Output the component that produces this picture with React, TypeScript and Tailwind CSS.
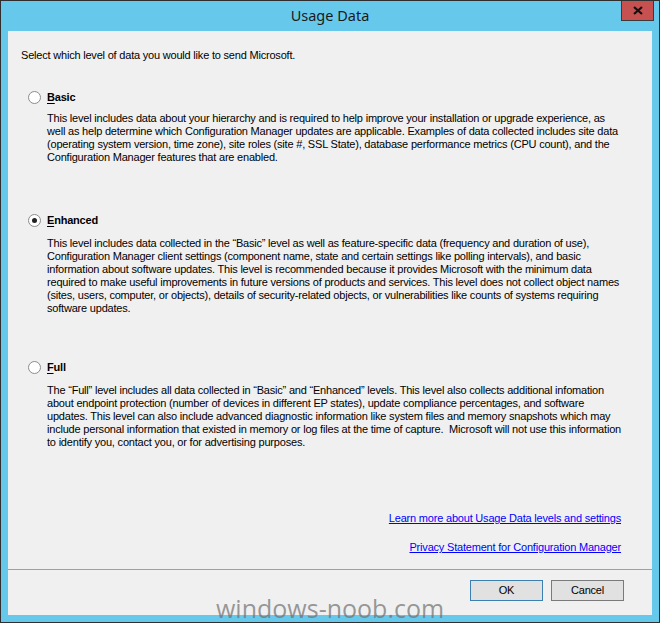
import React from 'react';

const body = "font-['Liberation_Sans',Arial,sans-serif] text-[11px] leading-[13px] tracking-[-0.2px] text-black";

function Radio({ checked }: { checked?: boolean }) {
  return (
    <span className="flex h-[13px] w-[13px] items-center justify-center rounded-full border border-[#8c8c8c] bg-white">
      {checked && <span className="h-[5px] w-[5px] rounded-full bg-[#222]" />}
    </span>
  );
}

function Option({
  label,
  checked,
  lines,
  className,
  descTop,
}: {
  label: string;
  checked?: boolean;
  lines: string[];
  className: string;
  descTop: string;
}) {
  return (
    <div className={className}>
      <div className="flex h-[13px] items-center gap-[6px] pl-[20px]">
        <Radio checked={checked} />
        <span className={`${body} font-bold`}>
          <span className="underline underline-offset-2">{label[0]}</span>
          {label.slice(1)}
        </span>
      </div>
      <div className={`${body} ${descTop} whitespace-pre pl-[39px]`}>
        {lines.map((l, i) => (
          <div key={i}>{l}</div>
        ))}
      </div>
    </div>
  );
}

export default function App() {
  return (
    <div className="relative h-[623px] w-[660px] overflow-hidden border border-[#2f2f2f] bg-[#66c9ec]">
      {/* title bar */}
      <div className="relative flex h-[30px] items-center justify-center">
        <span className="font-['Noto_Sans',sans-serif] text-[14.5px] text-[#1a1a1a]">Usage Data</span>
        <div className="absolute right-[5px] top-[-1px] flex h-[21px] w-[33px] items-center justify-center border border-[#3a3a3a] bg-[#c75050]">
          <svg width="10" height="9" viewBox="0 0 10 9">
            <path d="M1 1 L9 8 M9 1 L1 8" stroke="#111" strokeWidth="2.2" />
          </svg>
        </div>
      </div>

      {/* content panel */}
      <div className="mx-[7px] flex h-[584px] flex-col bg-[#f0f0f0]">
        <div className="flex flex-1 flex-col">
          <div className={`${body} mt-[18px] pl-[13px]`}>Select which level of data you would like to send Microsoft.</div>

          <Option
            className="mt-[29px]"
            descTop="mt-[8px]"
            label="Basic"
            lines={[
              'This level includes data about your hierarchy and is required to help improve your installation or upgrade experience, as',
              'well as help determine which Configuration Manager updates are applicable. Examples of data collected includes site data',
              '(operating system version, time zone), site roles (site #, SSL State), database performance metrics (CPU count), and the',
              'Configuration Manager features that are enabled.',
            ]}
          />

          <Option
            className="mt-[50px]"
            descTop="mt-[10px]"
            label="Enhanced"
            checked
            lines={[
              'This level includes data collected in the \u201cBasic\u201d level as well as feature-specific data (frequency and duration of use),',
              'Configuration Manager client settings (component name, state and certain settings like polling intervals), and basic',
              'information about software updates. This level is recommended because it provides Microsoft with the minimum data',
              'required to make useful improvements in future versions of products and services. This level does not collect object names',
              '(sites, users, computer, or objects), details of security-related objects, or vulnerabilities like counts of systems requiring',
              'software updates.',
            ]}
          />

          <Option
            className="mt-[46px]"
            descTop="mt-[10px]"
            label="Full"
            lines={[
              'The \u201cFull\u201d level includes all data collected in \u201cBasic\u201d and \u201cEnhanced\u201d levels. This level also collects additional infomation',
              'about endpoint protection (number of devices in different EP states), update compliance percentages, and software',
              'updates. This level can also include advanced diagnostic information like system files and memory snapshots which may',
              'include personal information that existed in memory or log files at the time of capture.  Microsoft will not use this information',
              'to identify you, contact you, or for advertising purposes.',
            ]}
          />

          <div className={`${body} mt-auto flex flex-col items-end gap-[16px] pb-[15px] pr-[31px]`}>
            <a className="text-[#0000ff] underline">Learn more about Usage Data levels and settings</a>
            <a className="text-[#0000ff] underline">Privacy Statement for Configuration Manager</a>
          </div>
        </div>

        <div className="flex h-[46px] items-start justify-end gap-[8px] border-t border-[#a0a0a0] pr-[28px] pt-[10px]">
          <button className={`${body} h-[21px] w-[73px] border border-[#3c7fb1] bg-[#e1e1e1]`}>OK</button>
          <button className={`${body} h-[21px] w-[73px] border border-[#7a7a7a] bg-[#e1e1e1]`}>Cancel</button>
        </div>
      </div>

      {/* watermark */}
      <div className="pointer-events-none absolute bottom-[-5px] left-[215px] font-['Open_Sans',sans-serif] text-[25px] text-[#6e6e6e]/70">
        windows-noob.com
      </div>
    </div>
  );
}
